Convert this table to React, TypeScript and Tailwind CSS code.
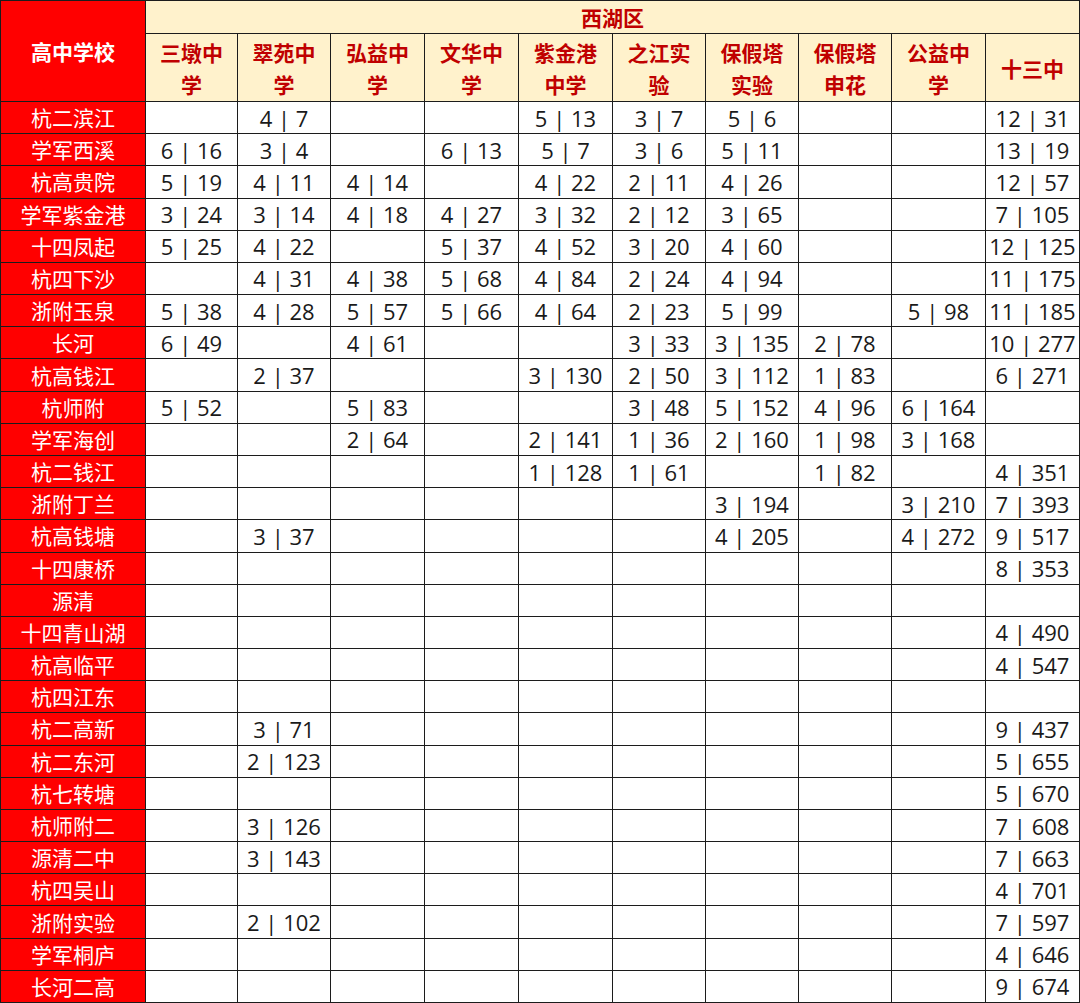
import React from "react";

const cols: string[][] = [
  ["三墩中", "学"],
  ["翠苑中", "学"],
  ["弘益中", "学"],
  ["文华中", "学"],
  ["紫金港", "中学"],
  ["之江实", "验"],
  ["保假塔", "实验"],
  ["保假塔", "申花"],
  ["公益中", "学"],
  ["十三中"],
];

const rows: [string, string[]][] = [
  ["杭二滨江", ["", "4 | 7", "", "", "5 | 13", "3 | 7", "5 | 6", "", "", "12 | 31"]],
  ["学军西溪", ["6 | 16", "3 | 4", "", "6 | 13", "5 | 7", "3 | 6", "5 | 11", "", "", "13 | 19"]],
  ["杭高贵院", ["5 | 19", "4 | 11", "4 | 14", "", "4 | 22", "2 | 11", "4 | 26", "", "", "12 | 57"]],
  ["学军紫金港", ["3 | 24", "3 | 14", "4 | 18", "4 | 27", "3 | 32", "2 | 12", "3 | 65", "", "", "7 | 105"]],
  ["十四凤起", ["5 | 25", "4 | 22", "", "5 | 37", "4 | 52", "3 | 20", "4 | 60", "", "", "12 | 125"]],
  ["杭四下沙", ["", "4 | 31", "4 | 38", "5 | 68", "4 | 84", "2 | 24", "4 | 94", "", "", "11 | 175"]],
  ["浙附玉泉", ["5 | 38", "4 | 28", "5 | 57", "5 | 66", "4 | 64", "2 | 23", "5 | 99", "", "5 | 98", "11 | 185"]],
  ["长河", ["6 | 49", "", "4 | 61", "", "", "3 | 33", "3 | 135", "2 | 78", "", "10 | 277"]],
  ["杭高钱江", ["", "2 | 37", "", "", "3 | 130", "2 | 50", "3 | 112", "1 | 83", "", "6 | 271"]],
  ["杭师附", ["5 | 52", "", "5 | 83", "", "", "3 | 48", "5 | 152", "4 | 96", "6 | 164", ""]],
  ["学军海创", ["", "", "2 | 64", "", "2 | 141", "1 | 36", "2 | 160", "1 | 98", "3 | 168", ""]],
  ["杭二钱江", ["", "", "", "", "1 | 128", "1 | 61", "", "1 | 82", "", "4 | 351"]],
  ["浙附丁兰", ["", "", "", "", "", "", "3 | 194", "", "3 | 210", "7 | 393"]],
  ["杭高钱塘", ["", "3 | 37", "", "", "", "", "4 | 205", "", "4 | 272", "9 | 517"]],
  ["十四康桥", ["", "", "", "", "", "", "", "", "", "8 | 353"]],
  ["源清", ["", "", "", "", "", "", "", "", "", ""]],
  ["十四青山湖", ["", "", "", "", "", "", "", "", "", "4 | 490"]],
  ["杭高临平", ["", "", "", "", "", "", "", "", "", "4 | 547"]],
  ["杭四江东", ["", "", "", "", "", "", "", "", "", ""]],
  ["杭二高新", ["", "3 | 71", "", "", "", "", "", "", "", "9 | 437"]],
  ["杭二东河", ["", "2 | 123", "", "", "", "", "", "", "", "5 | 655"]],
  ["杭七转塘", ["", "", "", "", "", "", "", "", "", "5 | 670"]],
  ["杭师附二", ["", "3 | 126", "", "", "", "", "", "", "", "7 | 608"]],
  ["源清二中", ["", "3 | 143", "", "", "", "", "", "", "", "7 | 663"]],
  ["杭四吴山", ["", "", "", "", "", "", "", "", "", "4 | 701"]],
  ["浙附实验", ["", "2 | 102", "", "", "", "", "", "", "", "7 | 597"]],
  ["学军桐庐", ["", "", "", "", "", "", "", "", "", "4 | 646"]],
  ["长河二高", ["", "", "", "", "", "", "", "", "", "9 | 674"]],
];

const cjk = { fontFamily: '"Noto Sans CJK SC", "Noto Sans", sans-serif' };
const num = { fontFamily: '"Open Sans", "Noto Sans CJK SC", sans-serif' };

export default function App() {
  return (
    <div className="w-[1080px] h-[1003px] bg-white overflow-hidden">
      <div
        className="grid box-border w-[1080px] h-[1003px] gap-px bg-[#1c1c1c] border border-[#1c1c1c] grid-cols-[144px_91px_92px_93px_93px_93px_92px_92px_92px_93px_93px] grid-rows-[32px_67px_repeat(28,minmax(0,1fr))]"
        style={cjk}
      >
        <div className="row-span-2 bg-[#ff0000] flex items-center justify-center text-white font-bold text-[21px] leading-none">
          高中学校
        </div>
        <div className="col-span-10 bg-[#fff2cc] flex items-center justify-center text-[#c00000] font-bold text-[21px] leading-none">
          西湖区
        </div>
        {cols.map((c, i) => (
          <div
            key={i}
            className="bg-[#fff2cc] flex flex-col items-center justify-center text-[#c00000] font-bold text-[21px] leading-[32px]"
          >
            {c.map((l, j) => (
              <span key={j}>{l}</span>
            ))}
          </div>
        ))}
        {rows.map(([name, vals], r) => (
          <React.Fragment key={r}>
            <div className="bg-[#ff0000] flex items-center justify-center text-white text-[21px] leading-none">
              {name}
            </div>
            {vals.map((v, i) => (
              <div
                key={i}
                className="bg-white flex items-center justify-center text-[#1a1a1a] text-[22px] leading-none whitespace-pre"
                style={num}
              >
                {v}
              </div>
            ))}
          </React.Fragment>
        ))}
      </div>
    </div>
  );
}
